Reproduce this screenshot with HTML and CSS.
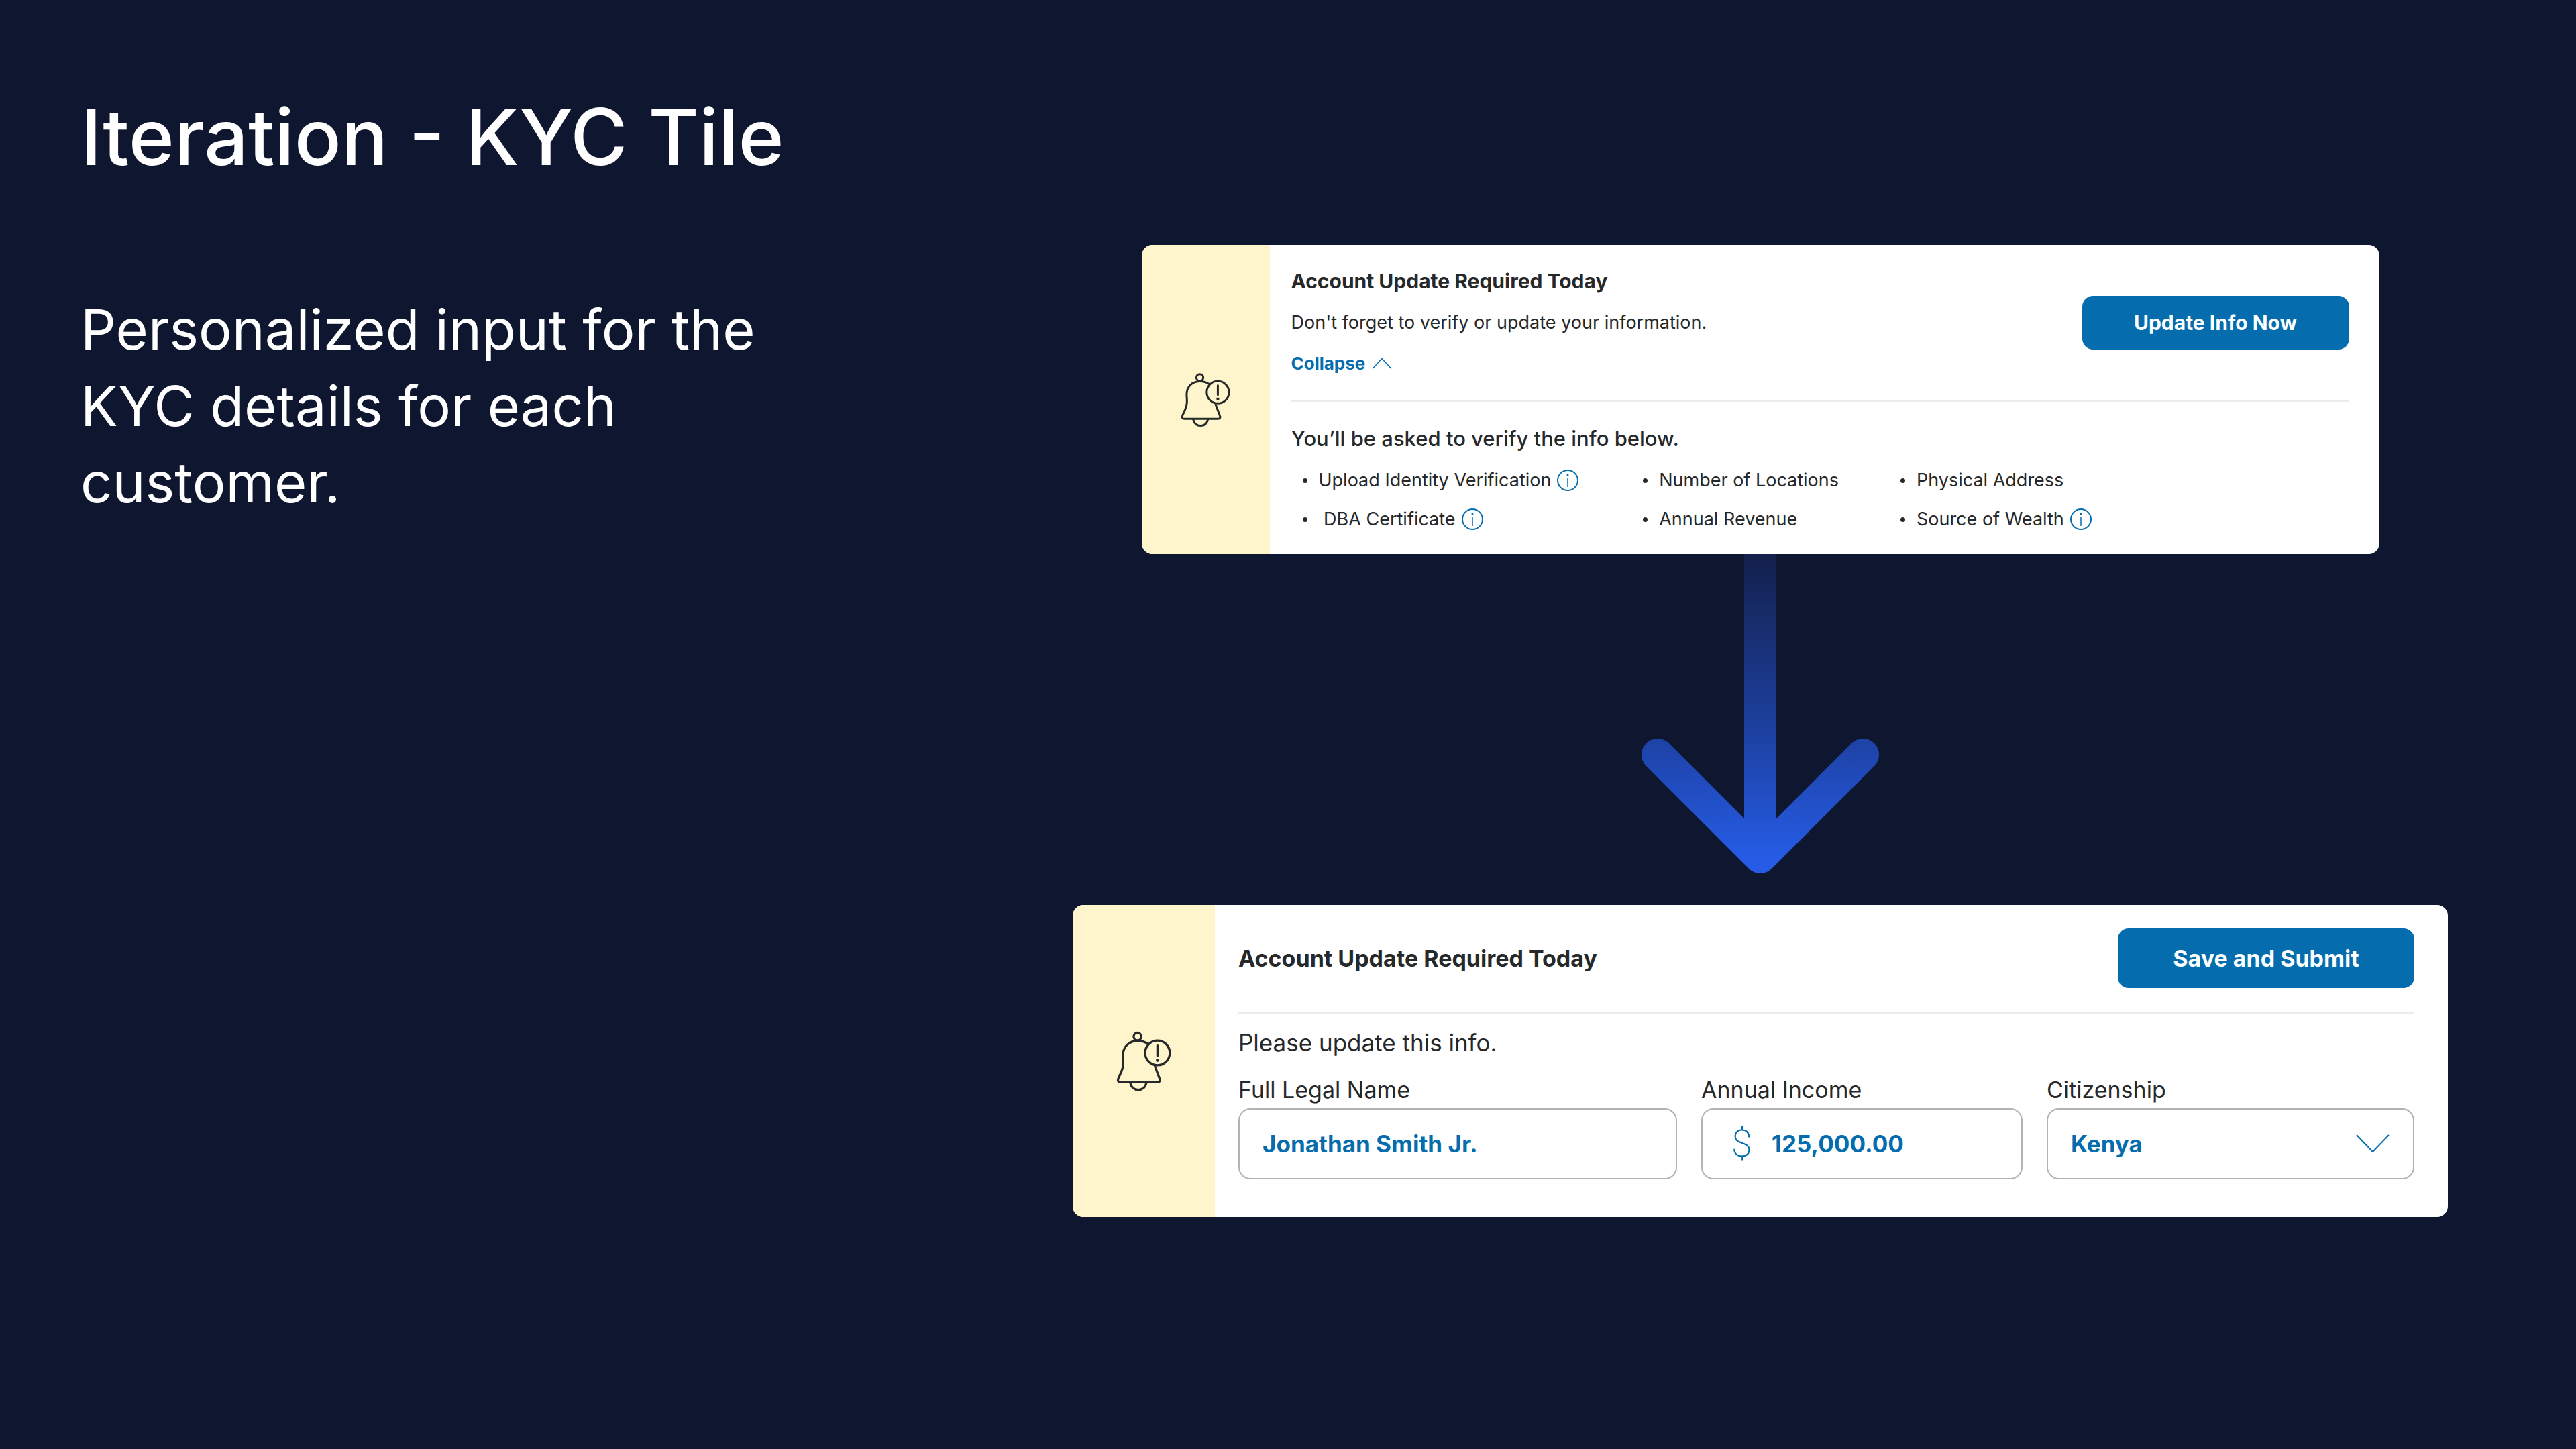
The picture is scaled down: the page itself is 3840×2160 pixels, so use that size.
FILE: index.html
```html
<!DOCTYPE html>
<html lang="en">
<head>
<meta charset="utf-8">
<meta name="viewport" content="width=device-width, initial-scale=1">
<title>Iteration - KYC Tile</title>
<link rel="stylesheet" href="styles.css">
</head>
<body>
<svg class="sprite" aria-hidden="true">
  <symbol id="bell" viewBox="60 70 223 244">
    <g fill="none" stroke="currentColor" stroke-width="9" stroke-linecap="round" stroke-linejoin="round">
      <circle cx="146" cy="92" r="15.500"/>
      <path d="M188 121C176 113 162 109 147 109C111 109 87 134 87 168C87 186 90 197 87 213C84 232 74 247 68 263C64 272 69 277 76 277H228C236 277 240 272 236 263L217 213"/>
      <path d="M117 281C121 298 133 308 149 308C166 308 178 298 182 281"/>
      <circle cx="227" cy="158" r="50"/>
      <path d="M227 128V170"/>
    </g>
    <circle cx="227" cy="188" r="6.500" fill="currentColor"/>
  </symbol>
  <symbol id="info" viewBox="0 0 32 32">
    <circle cx="16" cy="16" r="15" fill="none" stroke="currentColor" stroke-width="2"/>
    <path d="M16 13V26" fill="none" stroke="currentColor" stroke-width="1.500"/>
    <circle cx="16" cy="8" r="1.500" fill="currentColor"/>
  </symbol>
</svg>

<main class="slide">
  <section class="intro">
    <h1 class="intro-title">Iteration - KYC Tile</h1>
    <p class="intro-text">Personalized input for the KYC details for each customer.</p>
  </section>

  <div class="flow">
    <article class="card card-notice">
      <div class="card-side"><svg class="bell bell-notice" aria-hidden="true"><use href="#bell"/></svg></div>
      <div class="card-body">
        <header class="notice-head">
          <div class="notice-copy">
            <h2 class="notice-title">Account Update Required Today</h2>
            <p class="notice-text">Don't forget to verify or update your information.</p>
            <button class="collapse" type="button">Collapse
              <svg class="collapse-icon" viewBox="0 0 30 18" aria-hidden="true"><path d="M1 16.500L15 1.500L29 16.500" fill="none" stroke="currentColor" stroke-width="1.500"/></svg>
            </button>
          </div>
          <button class="primary primary-notice" type="button">Update Info Now</button>
        </header>
        <h3 class="verify-title">You’ll be asked to verify the info below.</h3>
        <ul class="verify-list">
          <li>Upload Identity Verification <button class="info" type="button" aria-label="About identity verification"><svg aria-hidden="true"><use href="#info"/></svg></button></li>
          <li>Number of Locations</li>
          <li>Physical Address</li>
          <li>&nbsp;DBA Certificate <button class="info" type="button" aria-label="About the DBA certificate"><svg aria-hidden="true"><use href="#info"/></svg></button></li>
          <li>Annual Revenue</li>
          <li>Source of Wealth <button class="info" type="button" aria-label="About source of wealth"><svg aria-hidden="true"><use href="#info"/></svg></button></li>
        </ul>
      </div>
    </article>

    <svg class="arrow" viewBox="0 0 354 476" aria-hidden="true">
      <defs>
        <linearGradient id="fade" gradientUnits="userSpaceOnUse" x1="0" y1="0" x2="0" y2="476">
          <stop offset="0" stop-color="#13204b"/>
          <stop offset="0.500" stop-color="#1c3d98"/>
          <stop offset="0.950" stop-color="#255be5"/>
        </linearGradient>
      </defs>
      <path d="M177 -24V452M24 299L177 452L330 299" fill="none" stroke="url(#fade)" stroke-width="48" stroke-linecap="round" stroke-linejoin="round"/>
    </svg>

    <form class="card card-form">
      <div class="card-side"><svg class="bell bell-form" aria-hidden="true"><use href="#bell"/></svg></div>
      <div class="card-body">
        <header class="form-head">
          <h2 class="form-title">Account Update Required Today</h2>
          <button class="primary primary-form" type="button">Save and Submit</button>
        </header>
        <p class="form-text">Please update this info.</p>
        <div class="fields">
          <div class="field">
            <label for="name">Full Legal Name</label>
            <div class="box"><input class="control" id="name" type="text" value="Jonathan Smith Jr."></div>
          </div>
          <div class="field">
            <label for="income">Annual Income</label>
            <div class="box"><span class="currency">$</span><input class="control control-income" id="income" type="text" value="125,000.00"></div>
          </div>
          <div class="field">
            <label for="country">Citizenship</label>
            <div class="box">
              <select class="control" id="country"><option>Kenya</option></select>
              <svg class="box-chevron" viewBox="0 0 50 28" aria-hidden="true"><path d="M1 1L25 26L49 1" fill="none" stroke="currentColor" stroke-width="2"/></svg>
            </div>
          </div>
        </div>
      </div>
    </form>
  </div>
</main>
</body>
</html>
```
FILE: styles.css
```css
:root {
  --navy: #0e1630;
  --blue: #056dae;
  --ink: #262829;
  --cream: #fff5cd;
  --rule: #ebebeb;
}

* { box-sizing: border-box; }

body {
  margin: 0;
  min-height: 100vh;
  background: var(--navy);
  color: var(--ink);
  font-family: Inter, "Liberation Sans", sans-serif;
}

h1, h2, h3, p, ul { margin: 0; padding: 0; }

button, input, select { font-family: inherit; }

button {
  border: 0;
  padding: 0;
  background: none;
  cursor: pointer;
}

.sprite { display: block; width: 0; height: 0; }

.slide {
  display: grid;
  grid-template-columns: 1479fr 2050fr;
  align-items: start;
  padding: 0 191px 0 120px;
}

/* Left column */
.intro { padding-top: 134px; color: #fff; }

.intro-title {
  font-size: 116px;
  font-weight: 500;
  line-height: 140px;
}

.intro-text {
  max-width: 1080px;
  margin-top: 160px;
  font-size: 83px;
  line-height: 114px;
}

/* Right column */
.flow {
  display: flex;
  flex-direction: column;
  align-items: center;
  padding: 365px 0 60px;
}

.card {
  display: flex;
  overflow: hidden;
  border-radius: 16px;
  background: #fff;
}

.card-side {
  display: flex;
  flex: none;
  align-items: center;
  justify-content: center;
  background: var(--cream);
}

.card-body { flex: 1; min-width: 0; }

.card-notice { width: 90%; }
.card-notice .card-side { width: 191px; }
.card-notice .card-body { padding: 24px 45px 23px 32px; }
.card-form { width: 100%; margin-top: 47px; }
.card-form .card-side { width: 212px; }
.card-form .card-body { padding: 35px 50px 56px 35px; }

.bell-notice { width: 74px; height: 82px; }
.bell-form { width: 82px; height: 90px; }

.primary {
  flex: none;
  border-radius: 16px;
  background: var(--blue);
  color: #fff;
  font-weight: 700;
}

.primary-notice { width: 398px; height: 80px; font-size: 30px; }
.primary-form { width: 442px; height: 89px; font-size: 34px; }

.notice-head {
  display: flex;
  align-items: center;
  justify-content: space-between;
  padding-bottom: 25px;
  border-bottom: 2px solid var(--rule);
  line-height: 61px;
}

.notice-head .primary { line-height: 40px; }

.notice-title { font-size: 30px; font-weight: 700; }
.notice-text { font-size: 27px; }

.collapse {
  display: flex;
  align-items: center;
  gap: 10px;
  color: var(--blue);
  font-size: 26px;
  font-weight: 700;
  line-height: 61px;
}

.collapse-icon { width: 30px; height: 18px; }

.verify-title {
  margin-top: 25px;
  font-size: 31px;
  font-weight: 500;
  line-height: 60px;
}

.verify-list {
  display: grid;
  grid-template-columns: 508fr 384fr 669fr;
  margin-top: 3px;
  padding-left: 17px;
  list-style: none;
  font-size: 27px;
  line-height: 58px;
}

.verify-list li { display: flex; align-items: center; }

.verify-list li::before {
  content: "";
  width: 7px;
  height: 7px;
  margin-right: 17px;
  border-radius: 50%;
  background: var(--ink);
}

.info { display: flex; margin-left: 9px; color: var(--blue); }
.info svg { width: 32px; height: 32px; }

.arrow { width: 354px; height: 476px; }

.form-head {
  display: flex;
  align-items: center;
  justify-content: space-between;
  padding-bottom: 36px;
  border-bottom: 2px solid var(--rule);
}

.form-title { font-size: 34px; font-weight: 700; line-height: 48px; }
.form-text { margin-top: 19px; font-size: 35px; line-height: 48px; }

.fields {
  display: grid;
  grid-template-columns: 654fr 479fr 548fr;
  gap: 36px;
  margin-top: 23px;
}

.field { min-width: 0; font-size: 34px; }
.field label { display: block; line-height: 48px; }

.box {
  display: flex;
  align-items: center;
  height: 106px;
  margin-top: 3px;
  border: 2px solid #b3b3b3;
  border-radius: 18px;
  color: var(--blue);
}

.control {
  flex: 1;
  min-width: 0;
  height: 100%;
  padding: 0 0 0 34px;
  border: 0;
  background: none;
  color: inherit;
  font-size: 35px;
  font-weight: 700;
  appearance: none;
}

.control-income { padding-left: 29px; }

.currency {
  padding-left: 43px;
  font-family: Roboto, "Liberation Sans", sans-serif;
  font-size: 56px;
  font-weight: 200;
}

.box-chevron { flex: none; width: 50px; height: 28px; margin-right: 35px; }
```
